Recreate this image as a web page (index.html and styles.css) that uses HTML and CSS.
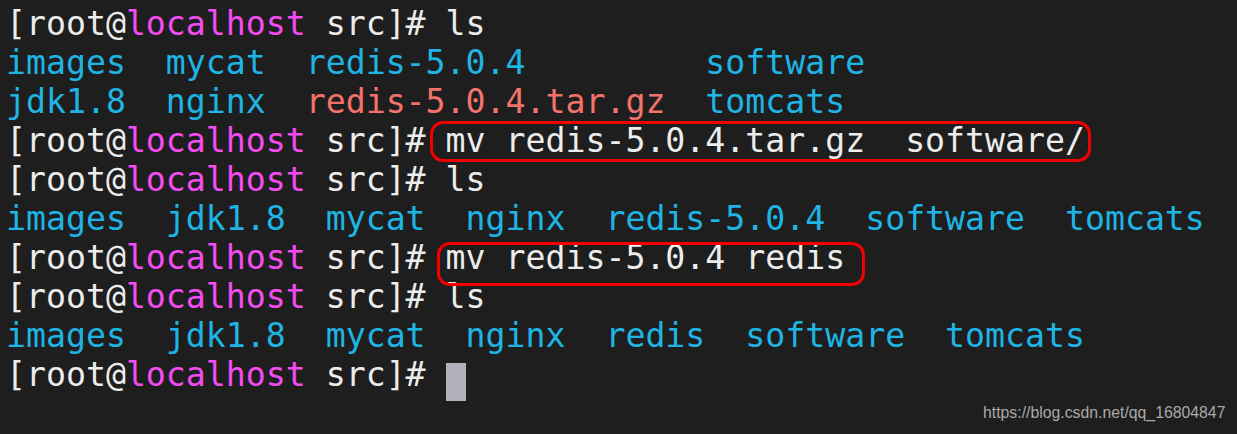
FILE: index.html
```html
<!DOCTYPE html>
<html>
<head>
<meta charset="utf-8">
<link rel="stylesheet" href="styles.css">
</head>
<body>
<div class="term">
<div class="line"><span class="w">[root@</span><span class="m">localhost</span><span class="w"> src]# ls</span></div>
<div class="line"><span class="c">images  mycat  redis-5.0.4         software</span></div>
<div class="line"><span class="c">jdk1.8  nginx  </span><span class="r">redis-5.0.4.tar.gz</span><span class="c">  tomcats</span></div>
<div class="line"><span class="w">[root@</span><span class="m">localhost</span><span class="w"> src]# mv redis-5.0.4.tar.gz  software/</span></div>
<div class="line"><span class="w">[root@</span><span class="m">localhost</span><span class="w"> src]# ls</span></div>
<div class="line"><span class="c">images  jdk1.8  mycat  nginx  redis-5.0.4  software  tomcats</span></div>
<div class="line"><span class="w">[root@</span><span class="m">localhost</span><span class="w"> src]# mv redis-5.0.4 redis</span></div>
<div class="line"><span class="w">[root@</span><span class="m">localhost</span><span class="w"> src]# ls</span></div>
<div class="line"><span class="c">images  jdk1.8  mycat  nginx  redis  software  tomcats</span></div>
<div class="line"><span class="w">[root@</span><span class="m">localhost</span><span class="w"> src]# </span><span class="cursor"> </span></div>
<div class="mark mark1"></div>
<div class="mark mark2"></div>
<div class="watermark">https://blog.csdn.net/qq_16804847</div>
</div>
</body>
</html>
```
FILE: styles.css
```css
html, body {
  margin: 0;
  padding: 0;
  background: #1e1e1e;
  width: 1237px;
  height: 434px;
  overflow: hidden;
}
.term {
  position: relative;
  width: 1237px;
  height: 434px;
  box-sizing: border-box;
  padding: 4px 0 0 6px;
  font-family: "DejaVu Sans Mono", monospace;
  font-size: 33.2px;
  line-height: 39px;
}
.line {
  height: 39px;
  white-space: pre;
}
.w { color: #ececec; }
.m { color: #f54cf2; }
.c { color: #1eb4e4; }
.r { color: #f3736b; }
.cursor {
  display: inline-block;
  width: 20px;
  height: 38px;
  background: #b1b1bd;
  vertical-align: -8px;
}
.mark {
  position: absolute;
  border: 3px solid #f00000;
  border-radius: 13px;
  box-sizing: border-box;
}
.mark1 {
  left: 430px;
  top: 121px;
  width: 661px;
  height: 41px;
}
.mark2 {
  left: 437px;
  top: 242px;
  width: 428px;
  height: 44px;
}
.watermark {
  position: absolute;
  left: 983px;
  top: 403px;
  font-family: "Liberation Sans", Arial, sans-serif;
  font-size: 15.8px;
  line-height: 20px;
  color: #a9a9a9;
}
```
